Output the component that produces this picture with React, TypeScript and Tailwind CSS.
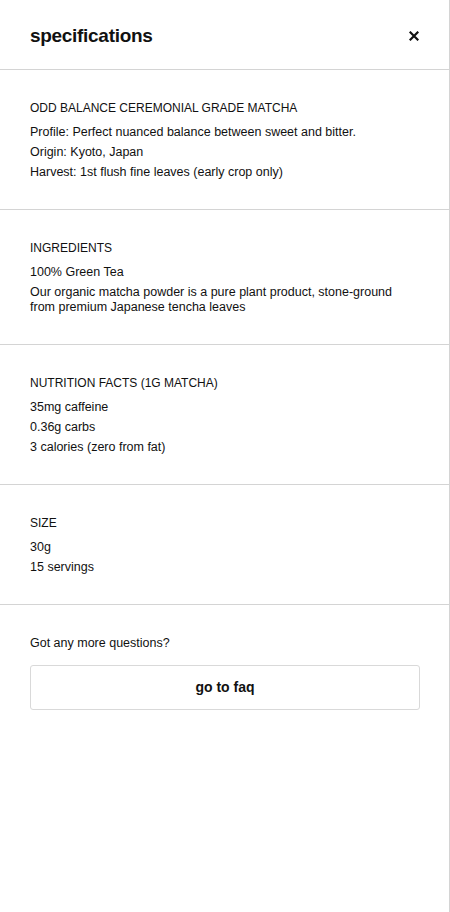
const sections = [
  {
    title: 'ODD BALANCE CEREMONIAL GRADE MATCHA',
    items: [
      'Profile: Perfect nuanced balance between sweet and bitter.',
      'Origin: Kyoto, Japan',
      'Harvest: 1st flush fine leaves (early crop only)',
    ],
  },
  {
    title: 'INGREDIENTS',
    items: [
      '100% Green Tea',
      'Our organic matcha powder is a pure plant product, stone-ground from premium Japanese tencha leaves',
    ],
  },
  {
    title: 'NUTRITION FACTS (1G MATCHA)',
    items: ['35mg caffeine', '0.36g carbs', '3 calories (zero from fat)'],
  },
  {
    title: 'SIZE',
    items: ['30g', '15 servings'],
  },
]

export default function App() {
  return (
    <div className="min-h-screen w-[450px] border-r border-[#d4d4d4] bg-white font-['Liberation_Sans',Arial,sans-serif] text-[#111]">
      <header className="flex h-[70px] items-center justify-between border-b border-[#d4d4d4] pt-[3px] pl-[30px] pr-[30px]">
        <h1 className="text-[19px] font-bold tracking-[-0.3px]">specifications</h1>
        <button type="button" aria-label="close" className="flex h-[10px] w-[10px] items-center justify-center">
          <svg width="10" height="10" viewBox="0 0 10 10" fill="none">
            <path d="M1.5 1.5L8.5 8.5M8.5 1.5L1.5 8.5" stroke="#111" strokeWidth="2.2" strokeLinecap="square" />
          </svg>
        </button>
      </header>

      {sections.map((s) => (
        <section key={s.title} className="border-b border-[#d4d4d4] px-[30px] pt-[30px] pb-[29px]">
          <h2 className="mb-[9px] text-xs leading-4">{s.title}</h2>
          <div className="flex flex-col gap-[5px]">
            {s.items.map((item) => (
              <p key={item} className="pr-4 text-[12.5px] leading-[15px]">
                {item}
              </p>
            ))}
          </div>
        </section>
      ))}

      <section className="px-[30px] pt-[30px]">
        <p className="text-[12.5px] leading-4">Got any more questions?</p>
        <button
          type="button"
          className="mt-[14px] flex h-[45px] w-[390px] items-center justify-center rounded-[3px] border border-[#d9d9d9] pb-[2px] text-sm font-bold"
        >
          go to faq
        </button>
      </section>
    </div>
  )
}
